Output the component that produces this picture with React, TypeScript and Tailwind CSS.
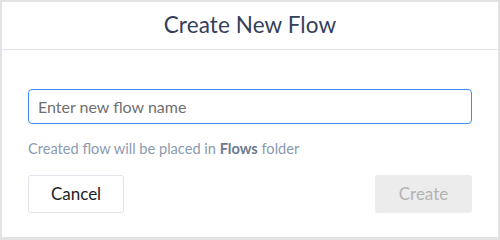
import React from "react";

export default function App() {
  return (
    <div
      className="w-[500px] h-[240px] bg-[#e3e3e3] pt-[2px] pl-[2px]"
      style={{ fontFamily: "Lato, 'Open Sans', sans-serif" }}
    >
      <div className="w-[496px] h-[235px] bg-white flex flex-col">
        <div className="h-[48px] border-b border-[#dfe4ec] flex items-center justify-center">
          <h1 className="text-[22.5px] text-[#34405a] leading-none tracking-[0.1px]">Create New Flow</h1>
        </div>
        <div className="px-[26px] pt-[39px] flex flex-col">
          <input
            className="h-[35px] w-full rounded-[4px] border-[1.5px] border-[#3b8df2] px-[9px] text-[16px] text-[#333] placeholder:text-[#6f6f6f] outline-none"
            placeholder="Enter new flow name"
          />
          <p className="mt-[15px] text-[14.6px] leading-[20px] text-[#8b9ab0]">
            Created flow will be placed in <span className="font-bold text-[#6b7a90]">Flows</span> folder
          </p>
          <div className="mt-[16px] flex justify-between">
            <button className="w-[96px] h-[38px] rounded-[3px] border border-[#dfe3ea] bg-white text-[17px] text-[#222]">
              Cancel
            </button>
            <button className="w-[97px] h-[38px] rounded-[3px] bg-[#ececec] text-[17px] text-[#b3b3b3]">
              Create
            </button>
          </div>
        </div>
      </div>
    </div>
  );
}
